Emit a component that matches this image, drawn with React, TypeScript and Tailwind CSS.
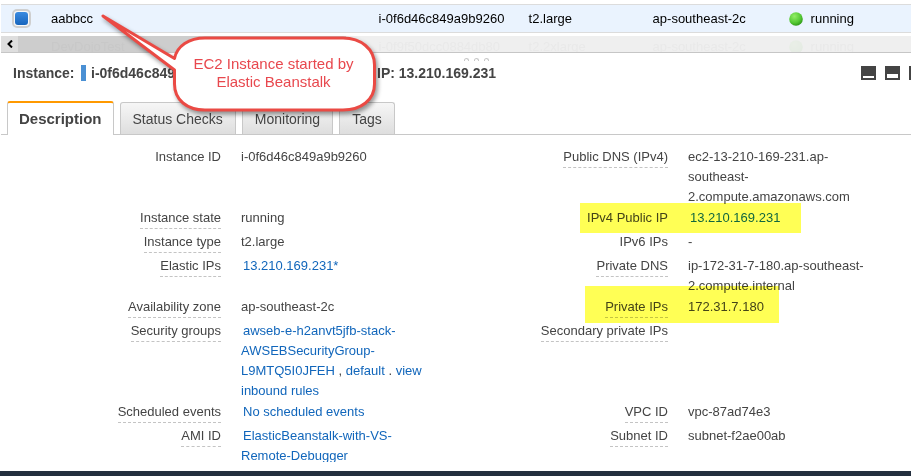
import React from "react";

type Field = { label: string; plain?: boolean; mark?: "public" | "private"; value: React.ReactNode };

function Link({ children }: { children: React.ReactNode }) {
  return (
    <a href="#" className="ml-[2px] text-[#1166bb]">
      {children}
    </a>
  );
}

const rows: [Field, Field][] = [
  [
    { label: "Instance ID", plain: true, value: "i-0f6d46c849a9b9260" },
    { label: "Public DNS (IPv4)", value: "ec2-13-210-169-231.ap-southeast-2.compute.amazonaws.com" },
  ],
  [
    { label: "Instance state", value: "running" },
    { label: "IPv4 Public IP", plain: true, mark: "public", value: <Link>13.210.169.231</Link> },
  ],
  [
    { label: "Instance type", value: "t2.large" },
    { label: "IPv6 IPs", plain: true, value: "-" },
  ],
  [
    { label: "Elastic IPs", value: <Link>13.210.169.231*</Link> },
    { label: "Private DNS", value: "ip-172-31-7-180.ap-southeast-2.compute.internal" },
  ],
  [
    { label: "Availability zone", value: "ap-southeast-2c" },
    { label: "Private IPs", mark: "private", value: "172.31.7.180" },
  ],
  [
    {
      label: "Security groups",
      value: (
        <>
          <Link>awseb-e-h2anvt5jfb-stack-AWSEBSecurityGroup-L9MTQ5I0JFEH</Link>
          {" , "}
          <a href="#" className="text-[#1166bb]">default</a>
          {" . "}
          <a href="#" className="text-[#1166bb]">view inbound rules</a>
        </>
      ),
    },
    { label: "Secondary private IPs", value: "" },
  ],
  [
    { label: "Scheduled events", value: <Link>No scheduled events</Link> },
    { label: "VPC ID", value: "vpc-87ad74e3" },
  ],
  [
    { label: "AMI ID", value: <Link>ElasticBeanstalk-with-VS-Remote-Debugger</Link> },
    { label: "Subnet ID", value: "subnet-f2ae00ab" },
  ],
];

function FieldCells({ label, plain, mark, value }: Field) {
  return (
    <>
      <dt className="min-h-6 text-right">
        <span className={plain ? "inline-block" : "inline-block border-b border-dashed border-[#c4c4c4]"}>{label}</span>
      </dt>
      <dd className="relative pr-4 pb-px pl-5">
        {value}
        {mark === "public" && (
          <span className="absolute -top-[5px] -left-[88px] h-[30px] w-[221px] bg-[#ffff55] mix-blend-multiply" />
        )}
        {mark === "private" && (
          <span className="absolute -top-[11px] -left-[83px] h-[37px] w-[194px] bg-[#ffff55] mix-blend-multiply" />
        )}
      </dd>
    </>
  );
}

function StatusBall({ faint }: { faint?: boolean }) {
  return (
    <svg width="14" height="14" viewBox="0 0 14 14" className={faint ? "opacity-5" : ""} aria-hidden="true">
      <defs>
        <radialGradient id="ball" cx="38%" cy="30%" r="72%">
          <stop offset="0" stopColor="#93ee66" />
          <stop offset="0.65" stopColor="#55c935" />
          <stop offset="1" stopColor="#2f9a18" />
        </radialGradient>
      </defs>
      <circle cx="7" cy="7" r="6.8" fill="url(#ball)" />
    </svg>
  );
}

const rowCols = "grid grid-cols-[50px_36%_150px_124px_136px_1fr] items-center";

function PaneButton({ size, label }: { size: "low" | "mid" | "full"; label: string }) {
  return (
    <button aria-label={label} className="block shrink-0">
      <svg width="15" height="14" viewBox="0 0 15 14" aria-hidden="true">
        <rect width="15" height="14" fill="#444" />
        {size === "low" && <rect x="2" y="10" width="11" height="2" fill="#fff" />}
        {size === "mid" && <rect x="2" y="8" width="11" height="4" fill="#fff" />}
        {size === "full" && <rect x="2" y="3" width="11" height="9" fill="#fff" />}
      </svg>
    </button>
  );
}

function Callout() {
  return (
    <div className="absolute top-[14px] left-[101px] h-[100px] w-[282px]">
      <svg width="282" height="108" viewBox="0 0 282 108" className="absolute inset-0 overflow-visible" aria-hidden="true">
        <path
          d="M2 2 L73.500 44.500 C76 32 88 24 104 24 H242 C260 24 273.500 35 273.500 51 V70 C273.500 86 260 96 242 96 H104 C86 96 73.500 86 73.500 70 V56 Z"
          fill="#fff"
          stroke="#ea4a44"
          strokeWidth="3"
          strokeLinejoin="round"
          style={{ filter: "drop-shadow(2px 3px 2px rgba(0,0,0,.4))" }}
        />
      </svg>
      <p className="absolute top-[41px] left-[74px] w-[197px] text-center text-[15px] leading-[18px] text-[#e8484e]">
        EC2 Instance started by
        <br />
        Elastic Beanstalk
      </p>
    </div>
  );
}

export default function App() {
  const tab = "h-8 rounded-t-[3px] border border-b-0 border-[#c8c8c8] bg-linear-to-b from-[#f6f6f6] to-[#dedede] px-3 text-[14px] text-[#444]";
  return (
    <div className="relative flex h-screen flex-col overflow-hidden bg-white pl-px font-['Liberation_Sans',Arial,sans-serif] text-[13px] leading-5 text-[#444]">
      <div className={`${rowCols} mt-1 h-[29px] shrink-0 border-y border-[#dcdcdc] bg-[#eaf3fe] text-black`}>
        <label className="relative ml-[11px] block size-[19px]">
          <input type="checkbox" defaultChecked aria-label="Select aabbcc" className="block size-[19px] appearance-none rounded-[5px] border-2 border-[#cfcfcf] bg-[#f8f8f8]" />
          <span className="absolute inset-[3px] rounded-[3px] bg-linear-to-b from-[#3b8be0] to-[#1765bd]" />
        </label>
        <span>aabbcc</span>
        <span>i-0f6d46c849a9b9260</span>
        <span>t2.large</span>
        <span>ap-southeast-2c</span>
        <span className="flex items-center gap-2">
          <StatusBall />
          running
        </span>
      </div>

      <div className="relative mt-[3px] h-[17px] shrink-0 overflow-hidden border-b border-[#c6c6c6] bg-[#efefef] text-[#e9e9e9]">
        <div className="flex h-full">
          <button aria-label="Scroll left" className="flex w-[17px] items-center justify-center bg-[#dedede]">
            <svg width="6" height="8" viewBox="0 0 6 8" aria-hidden="true">
              <path d="M5 0.500 L1.500 4 L5 7.500" fill="none" stroke="#000" strokeWidth="2" />
            </svg>
          </button>
          <div className="w-[36%] bg-[#cdcdcd]" />
        </div>
        <div className={`${rowCols} absolute inset-x-0 top-px`}>
          <span />
          <span className="text-[#c8c8c8]">DevDojoTest</span>
          <span>i-0f9f50dcc0884db80</span>
          <span>t2.2xlarge</span>
          <span>ap-southeast-2c</span>
          <span className="flex items-center gap-2">
            <StatusBall faint />
            running
          </span>
        </div>
      </div>

      <div className="flex h-2 shrink-0 items-center justify-center gap-[5px] pt-1 pl-10" aria-hidden="true">
        <span className="h-[3px] w-[5px] rounded-t-full border border-b-0 border-[#c8c8c8]" />
        <span className="h-[3px] w-[5px] rounded-t-full border border-b-0 border-[#c8c8c8]" />
        <span className="h-[3px] w-[5px] rounded-t-full border border-b-0 border-[#c8c8c8]" />
      </div>

      <header className="flex h-6 shrink-0 items-center pl-3 text-[14px] font-bold">
        <span className="w-[68px]">Instance:</span>
        <span className="mr-[5px] h-4 w-[5px] bg-[#4a90d4]" />
        <span className="w-[286px]">i-0f6d46c849a9b9260</span>
        <span>IP: 13.210.169.231</span>
        <div className="ml-auto flex w-[50px] gap-[9px] overflow-hidden">
          <PaneButton size="low" label="Collapse pane" />
          <PaneButton size="mid" label="Split pane" />
          <PaneButton size="full" label="Expand pane" />
        </div>
      </header>

      <nav className="mt-4 flex shrink-0 items-end gap-1.5 border-b border-[#c8c8c8] pl-1.5">
        <button className="-mb-px h-[34px] rounded-t-[3px] border border-t-2 border-b-0 border-[#c8c8c8] border-t-[#ff9900] bg-white px-[11px] text-[15px] font-bold">
          Description
        </button>
        <button className={tab}>Status Checks</button>
        <button className={tab}>Monitoring</button>
        <button className={tab}>Tags</button>
      </nav>

      <main className="min-h-0 flex-1 overflow-hidden pt-3">
        <dl className="mr-[17px] grid grid-cols-[220fr_227fr_220fr_226fr]">
          {rows.map(([left, right]) => (
            <React.Fragment key={left.label}>
              <FieldCells {...left} />
              <FieldCells {...right} />
            </React.Fragment>
          ))}
        </dl>
      </main>
      <footer className="-ml-px mt-[9px] h-[5px] shrink-0 bg-[#232f3e]" />

      <Callout />
    </div>
  );
}
